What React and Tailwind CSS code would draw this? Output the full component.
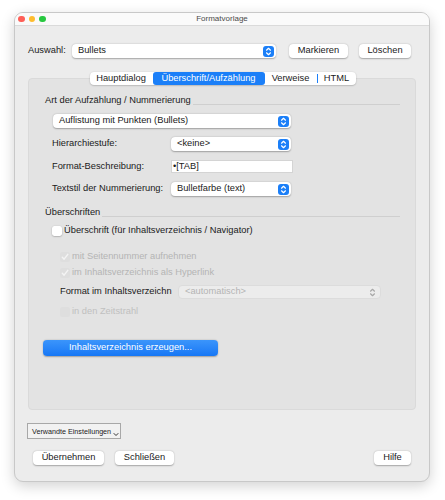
import React from 'react';

const font = { fontFamily: '"Liberation Sans", Arial, sans-serif' };

const Stepper = ({ disabled }) => (
  <span className={`flex h-[11px] w-[11px] shrink-0 items-center justify-center rounded-[3px] ${disabled ? '' : 'bg-[#1b7ff8]'}`}>
    <svg width="7" height="9" viewBox="0 0 7 9" fill="none" stroke={disabled ? '#a8a8a8' : '#fff'} strokeWidth="1.2" strokeLinecap="round" strokeLinejoin="round">
      <path d="M1.5 3.2 3.5 1.3 5.5 3.2" />
      <path d="M1.5 5.8 3.5 7.7 5.5 5.8" />
    </svg>
  </span>
);

const Select = ({ value, className = '', disabled }) => (
  <div
    className={`flex h-[14px] shrink-0 items-center justify-between rounded-[4px] pl-[6px] pr-[2px] ${
      disabled
        ? 'border border-[#dcdcdc] bg-[#ececec] text-[#b4b4b4]'
        : 'bg-white text-[#1a1a1a] shadow-[0_0.5px_1.5px_rgba(0,0,0,0.3)]'
    } ${className}`}
  >
    <span className="whitespace-nowrap text-[9.3px] leading-none">{value}</span>
    <Stepper disabled={disabled} />
  </div>
);

const Button = ({ children, className = '' }) => (
  <div className={`flex h-[14px] shrink-0 items-center justify-center whitespace-nowrap rounded-[4px] bg-white text-[9.3px] leading-none text-[#1a1a1a] shadow-[0_0.5px_1.5px_rgba(0,0,0,0.3)] ${className}`}>
    {children}
  </div>
);

const Check = ({ checked, disabled }) => (
  <span
    className={`flex h-[10px] w-[10px] shrink-0 items-center justify-center rounded-[2.5px] ${
      disabled ? 'bg-[#dedede]' : 'bg-white shadow-[0_0.5px_1.5px_rgba(0,0,0,0.35)]'
    }`}
  >
    {checked && (
      <svg width="8" height="8" viewBox="0 0 8 8" fill="none" stroke="#f4f4f4" strokeWidth="1.4" strokeLinecap="round" strokeLinejoin="round">
        <path d="M1.3 4.3 3.1 6.2 6.8 1.3" />
      </svg>
    )}
  </span>
);

const Label = ({ children, className = '' }) => (
  <span className={`shrink-0 whitespace-nowrap text-[9.3px] leading-none text-[#1a1a1a] ${className}`}>{children}</span>
);

const Section = ({ title }) => (
  <div className="flex h-[12px] items-center">
    <Label>{title}</Label>
    <div className="ml-[2px] mt-[6px] h-px flex-1 bg-[#cfcfcf]" />
  </div>
);

export default function App() {
  return (
    <div className="h-[500px] w-[445px] bg-white pl-[14px] pt-[12px]" style={font}>
      <div className="flex h-[470px] w-[416px] flex-col overflow-hidden rounded-[9px] border border-[#c8c8c8] bg-[#ececec] shadow-[0_4px_14px_rgba(0,0,0,0.18)]">
        {/* titlebar */}
        <div className="relative flex h-[13px] shrink-0 items-center border-b border-[#dadada] bg-[#fafafa]">
          <div className="ml-[3px] flex gap-[4px]">
            <span className="h-[6.5px] w-[6.5px] rounded-full bg-[#fe5f57]" />
            <span className="h-[6.5px] w-[6.5px] rounded-full bg-[#febc2e]" />
            <span className="h-[6.5px] w-[6.5px] rounded-full bg-[#28c840]" />
          </div>
          <span className="absolute left-0 right-0 text-center text-[8px] leading-none text-[#4a4a4a]">Formatvorlage</span>
        </div>

        {/* Auswahl */}
        <div className="ml-[13px] mt-[18px] flex h-[14px] items-center">
          <Label className="w-[44px]">Auswahl:</Label>
          <Select value="Bullets" className="w-[204px]" />
          <Button className="ml-[13px] w-[59px]">Markieren</Button>
          <Button className="ml-[11px] w-[52px]">Löschen</Button>
        </div>

        {/* tabs */}
        <div className="relative z-10 -mb-[7px] mt-[14px] flex justify-center pl-[1px]">
          <div className="flex h-[13px] items-center rounded-[4px] bg-white text-[9.3px] leading-none text-[#1a1a1a] shadow-[0_0.5px_1.5px_rgba(0,0,0,0.3)]">
            <span className="flex h-full w-[63px] items-center justify-center">Hauptdialog</span>
            <span className="flex h-full w-[112px] items-center justify-center rounded-[3px] bg-[#1b7ff8] text-white">Überschrift/Aufzählung</span>
            <span className="flex h-full w-[52px] items-center justify-center">Verweise</span>
            <span className="h-[9px] w-px bg-[#1b7ff8]" />
            <span className="flex h-full w-[38px] items-center justify-center">HTML</span>
          </div>
        </div>

        {/* panel */}
        <div className="ml-[13px] flex h-[332px] w-[388px] flex-col rounded-[4px] border border-[#dadada] bg-[#e3e3e3] pl-[16px] pr-[15px] pt-[16px]">
          <Section title="Art der Aufzählung / Nummerierung" />
          <Select value="Auflistung mit Punkten (Bullets)" className="ml-[8px] mt-[7px] w-[238px]" />

          <div className="ml-[7px] mt-[9px] flex h-[14px] items-center">
            <Label className="w-[119px]">Hierarchiestufe:</Label>
            <Select value="<keine>" className="w-[120px]" />
          </div>
          <div className="ml-[7px] mt-[9px] flex h-[13px] items-center">
            <Label className="w-[119px]">Format-Beschreibung:</Label>
            <div className="flex h-[13px] w-[122px] items-center border border-[#d4d4d4] bg-white pl-[1px] text-[9.3px] leading-none text-[#1a1a1a]">•[TAB]</div>
          </div>
          <div className="ml-[7px] mt-[9px] flex h-[14px] items-center">
            <Label className="w-[119px]">Textstil der Nummerierung:</Label>
            <Select value="Bulletfarbe (text)" className="w-[120px]" />
          </div>

          <div className="mt-[11px]">
            <Section title="Überschriften" />
          </div>
          <div className="ml-[7px] mt-[6px] flex h-[12px] items-center gap-[2px]">
            <Check />
            <Label>Überschrift (für Inhaltsverzeichnis / Navigator)</Label>
          </div>

          <div className="ml-[15px] mt-[14px] flex h-[12px] items-center gap-[2px]">
            <Check checked disabled />
            <Label className="text-[#b4b4b4]">mit Seitennummer aufnehmen</Label>
          </div>
          <div className="ml-[15px] mt-[4px] flex h-[12px] items-center gap-[2px]">
            <Check checked disabled />
            <Label className="text-[#b4b4b4]">im Inhaltsverzeichnis als Hyperlink</Label>
          </div>
          <div className="ml-[15px] mt-[6px] flex h-[14px] items-center">
            <Label className="w-[118px]">Format im Inhaltsverzeichn</Label>
            <Select value="<automatisch>" disabled className="w-[203px]" />
          </div>
          <div className="ml-[15px] mt-[7px] flex h-[12px] items-center gap-[2px]">
            <Check disabled />
            <Label className="text-[#c0c0c0]">in den Zeitstrahl</Label>
          </div>

          <div className="-ml-[2px] mt-[22px] flex h-[16px] w-[175px] items-center justify-center whitespace-nowrap rounded-[4px] bg-gradient-to-b from-[#3b95fb] to-[#1677f5] text-[9.3px] leading-none text-white shadow-[0_0.5px_1.5px_rgba(0,0,0,0.3)]">
            Inhaltsverzeichnis erzeugen...
          </div>
        </div>

        {/* Verwandte Einstellungen */}
        <div className="ml-[12px] mt-[13px] flex h-[16px] w-[94px] items-end justify-between border border-[#a8a8a8] bg-[#f2f2f2] pb-[3px] pl-[4px] pr-[1px]">
          <span className="whitespace-nowrap text-[7.2px] leading-none text-[#1a1a1a]">Verwandte Einstellungen</span>
          <svg width="6" height="5" viewBox="0 0 6 5" fill="none" stroke="#333" strokeWidth="1" strokeLinecap="round" strokeLinejoin="round" className="-mb-[2px] shrink-0">
            <path d="M1 1.5 3 3.5 5 1.5" />
          </svg>
        </div>

        {/* bottom buttons */}
        <div className="ml-[18px] mr-[18px] mt-[12px] flex h-[14px] items-center">
          <Button className="w-[71px]">Übernehmen</Button>
          <Button className="ml-[11px] w-[59px]">Schließen</Button>
          <Button className="ml-auto w-[37px]">Hilfe</Button>
        </div>
      </div>
    </div>
  );
}
